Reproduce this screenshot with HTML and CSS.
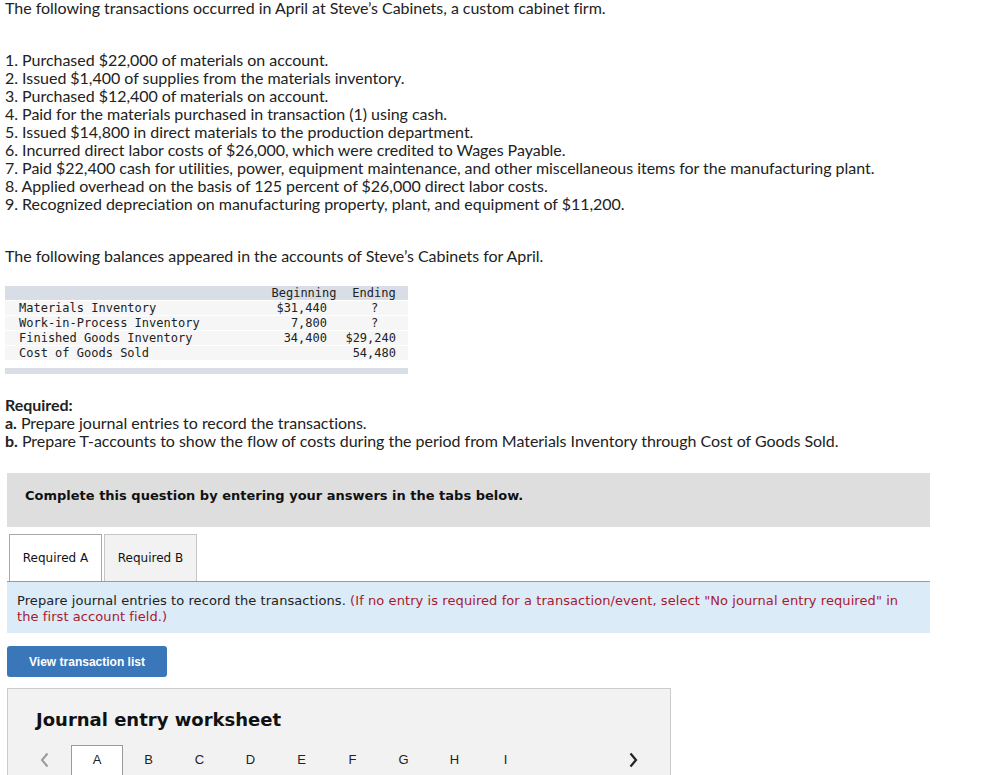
FILE: index.html
```html
<!DOCTYPE html>
<html lang="en">
<head>
<meta charset="utf-8">
<title>Steve's Cabinets</title>
<link rel="stylesheet" href="styles.css">
</head>
<body>
<div class="page">
  <p class="para first">The following transactions occurred in April at Steve’s Cabinets, a custom cabinet firm.</p>
  <div class="steps">
    <div>1. Purchased $22,000 of materials on account.</div>
    <div>2. Issued $1,400 of supplies from the materials inventory.</div>
    <div>3. Purchased $12,400 of materials on account.</div>
    <div>4. Paid for the materials purchased in transaction (1) using cash.</div>
    <div>5. Issued $14,800 in direct materials to the production department.</div>
    <div>6. Incurred direct labor costs of $26,000, which were credited to Wages Payable.</div>
    <div>7. Paid $22,400 cash for utilities, power, equipment maintenance, and other miscellaneous items for the manufacturing plant.</div>
    <div>8. Applied overhead on the basis of 125 percent of $26,000 direct labor costs.</div>
    <div>9. Recognized depreciation on manufacturing property, plant, and equipment of $11,200.</div>
  </div>
  <p class="para balances">The following balances appeared in the accounts of Steve’s Cabinets for April.</p>
  <table class="bal">
    <thead>
      <tr><th class="c1"></th><th class="c2">Beginning</th><th class="c3">Ending</th></tr>
    </thead>
    <tbody>
      <tr><td class="c1">Materials Inventory</td><td class="c2">$31,440</td><td class="c3 q">?</td></tr>
      <tr><td class="c1">Work-in-Process Inventory</td><td class="c2">7,800</td><td class="c3 q">?</td></tr>
      <tr><td class="c1">Finished Goods Inventory</td><td class="c2">34,400</td><td class="c3">$29,240</td></tr>
      <tr><td class="c1">Cost of Goods Sold</td><td class="c2"></td><td class="c3">54,480</td></tr>
    </tbody>
  </table>
  <div class="bal-bar"></div>

  <div class="required">
    <div class="req-title">Required:</div>
    <div><b>a.</b> Prepare journal entries to record the transactions.</div>
    <div><b>b.</b> Prepare T-accounts to show the flow of costs during the period from Materials Inventory through Cost of Goods Sold.</div>
  </div>

  <div class="work">
    <div class="prompt">Complete this question by entering your answers in the tabs below.</div>

    <div class="tabs">
      <div class="tab active">Required A</div>
      <div class="tab">Required B</div>
    </div>

    <div class="info">
      <div class="info-line">Prepare journal entries to record the transactions. <span class="note">(If no entry is required for a transaction/event, select "No journal entry required" in</span></div>
      <div class="info-line note">the first account field.)</div>
    </div>

    <button class="btn" type="button">View transaction list</button>

    <div class="sheet">
      <div class="sheet-title">Journal entry worksheet</div>
      <div class="nav">
        <div class="prev">
          <svg width="9" height="16" viewBox="0 0 9 16"><polyline points="7.5,1.5 2,8 7.5,14.5" fill="none" stroke="#9a9a9a" stroke-width="2"/></svg>
        </div>
        <div class="letter sel">A</div>
        <div class="letter">B</div>
        <div class="letter">C</div>
        <div class="letter">D</div>
        <div class="letter">E</div>
        <div class="letter">F</div>
        <div class="letter">G</div>
        <div class="letter">H</div>
        <div class="letter">I</div>
        <div class="spacer"></div>
        <div class="next">
          <svg width="9" height="16" viewBox="0 0 9 16"><polyline points="1.5,1.5 7,8 1.5,14.5" fill="none" stroke="#222" stroke-width="2.2"/></svg>
        </div>
      </div>
    </div>
  </div>
</div>
</body>
</html>
```
FILE: styles.css
```css
html, body { margin: 0; padding: 0; background: #fff; }
body { color: #222; font-family: "Lato", "Open Sans", sans-serif; font-size: 16px; line-height: 18px; letter-spacing: -0.03px; }
.page { padding-left: 5px; }
.para { margin: 0; white-space: nowrap; }
.para.first { margin-top: -1px; }
.steps { margin-top: 34px; }
.steps div { white-space: nowrap; }
.balances { margin-top: 34px; }

.bal {
  margin-top: 20px;
  border-collapse: separate;
  border-spacing: 0 1px;
  font-family: "DejaVu Sans Mono", "Liberation Mono", monospace;
  font-size: 12px;
  line-height: 14px;
  letter-spacing: 0;
  color: #222;
  width: 403px;
  table-layout: fixed;
}
.bal th { background: #d9dde5; font-weight: normal; height: 14px; padding: 0; text-align: center; }
.bal td { background: #f6f6f6; height: 14px; padding: 0; white-space: nowrap; }
.bal .c1 { width: 263px; padding-left: 14px; box-sizing: border-box; text-align: left; }
.bal .c2 { width: 72px; }
.bal .c3 { width: 68px; }
.bal td.c2 { text-align: right; padding-right: 13px; }
.bal td.c3 { text-align: right; padding-right: 12px; }
.bal td.q { text-align: center; padding-right: 0; padding-left: 1px; }
.bal-bar { width: 403px; height: 6px; background: #d9dde5; margin-top: 7px; }

.required { margin-top: 22px; }
.req-title { font-weight: bold; }
.required div { white-space: nowrap; }

.work { margin-left: 2px; width: 923px; letter-spacing: 0; }
.prompt {
  margin-top: 23px;
  height: 54px;
  box-sizing: border-box;
  padding: 15px 18px 0;
  background: #dedede;
  font: bold 13px/16px "DejaVu Sans", Verdana, sans-serif;
  color: #111;
}
.tabs {
  margin-top: 7px;
  display: flex;
  gap: 2px;
  padding-left: 2px;
  border-bottom: 1px solid #9a9a9a;
}
.tab {
  width: 93px;
  height: 47px;
  box-sizing: border-box;
  border: 1px solid #c6c6c6;
  border-bottom: none;
  background: #f2f2f2;
  font: 12px/47px "DejaVu Sans", Verdana, sans-serif;
  text-align: center;
  color: #111;
}
.tab.active { background: #fff; border-color: #a8a8a8; }
.info {
  background: #dbebf8;
  padding: 11px 10px 8px;
  font: 13px/16px "DejaVu Sans", Verdana, sans-serif;
  letter-spacing: 0.08px;
  color: #222;
}
.info-line { white-space: nowrap; }
.note { color: #a8192e; }
.btn {
  display: block;
  margin-top: 13px;
  width: 160px;
  height: 31px;
  border: none;
  border-radius: 3px;
  background: #3a76ba;
  color: #fff;
  font: bold 12px "Liberation Sans", Arial, sans-serif;
  padding: 0;
}
.sheet {
  margin-top: 11px;
  width: 664px;
  box-sizing: border-box;
  height: 100px;
  border: 1px solid #cccccc;
  background: #f2f2f2;
}
.sheet-title {
  padding: 20px 0 0 28px;
  font: bold 18px/22px "DejaVu Sans", Verdana, sans-serif;
  color: #111;
}
.nav { display: flex; margin-top: 14px; height: 32px; }
.prev { width: 63px; padding-left: 32px; box-sizing: border-box; padding-top: 7px; }
.letter {
  width: 51px;
  height: 32px;
  text-align: center;
  font: 13px/30px "Liberation Sans", Arial, sans-serif;
  color: #222;
}
.letter.sel { width: 52px; box-sizing: border-box; border: 1px solid #9a9a9a; border-bottom: none; background: #fff; line-height: 28px; }
.spacer { width: 98px; }
.next { padding-top: 7px; }
```
